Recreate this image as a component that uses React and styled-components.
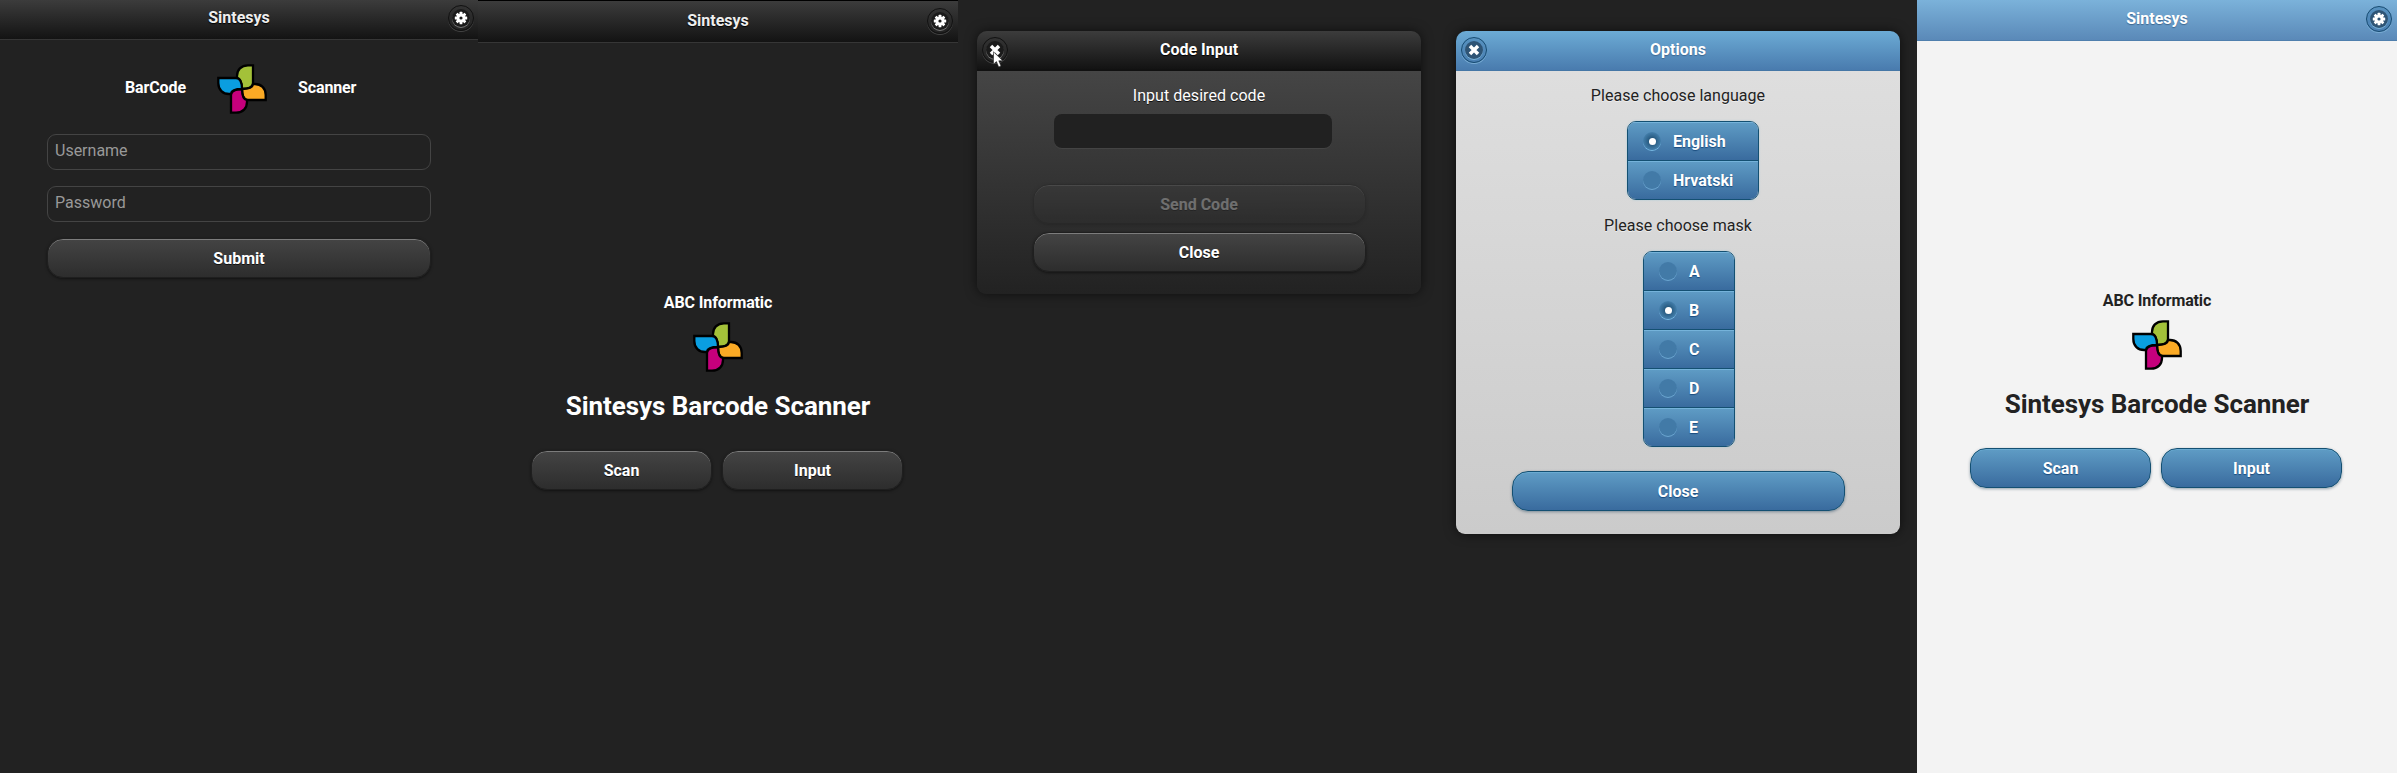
import React from "react";
import styled, { createGlobalStyle, css } from "styled-components";

const GlobalStyle = createGlobalStyle`
  *, *::before, *::after { box-sizing: border-box; }
  body { margin: 0; background: #222; }
  h1, h2, p { margin: 0; }
  button, input { font: inherit; }
`;

const darkButton = css`
  color: #fff;
  border: 1px solid #1f1f1f;
  background: linear-gradient(#444, #2d2d2d);
  text-shadow: 0 1px 0 #111;
  box-shadow: inset 0 1px 0 rgba(255, 255, 255, 0.3), 0 1px 3px rgba(0, 0, 0, 0.5);
`;

const blueButton = css`
  color: #fff;
  border: 1px solid #145072;
  background: linear-gradient(#5f9cc5, #396b9e);
  text-shadow: 0 1px 1px #194b7e;
  box-shadow: inset 0 1px 0 rgba(130, 200, 235, 0.35), 0 1px 3px rgba(0, 40, 70, 0.4);
`;

const Board = styled.div`
  display: flex;
  width: 2397px;
  height: 773px;
  overflow: hidden;
  background: #222;
  font-family: Roboto, "Liberation Sans", sans-serif;
  font-size: 16px;
  line-height: 20px;
`;

const Screen = styled.section`
  flex: none;
  width: ${(p) => p.$width}px;
  display: flex;
  flex-direction: column;
  background: ${(p) => (p.$light ? "#f3f3f3" : "#222")};
  color: ${(p) => (p.$light ? "#222" : "#fff")};
`;

const TopBar = styled.header`
  flex: none;
  position: relative;
  display: flex;
  justify-content: center;
  height: ${(p) => p.$height}px;
  padding-top: ${(p) => p.$pad}px;
  border-top: ${(p) => (p.$edge ? "1px solid #000" : "0")};
  border-bottom: 1px solid ${(p) => (p.$light ? "#4f7fad" : "#363636")};
  background: ${(p) =>
    p.$light
      ? "linear-gradient(#7bb2da, #5a89b8)"
      : "linear-gradient(#3c3c3c, #131313)"};
  color: ${(p) => (p.$light ? "#fff" : "#eee")};
  text-shadow: 0 1px 1px ${(p) => (p.$light ? "#3e6790" : "#000")};
`;

const Title = styled.h1`
  font-size: 16px;
  line-height: 20px;
  font-weight: 700;
`;

const RoundButton = styled.button`
  position: absolute;
  top: ${(p) => p.$top}px;
  ${(p) => (p.$left !== undefined ? `left: ${p.$left}px;` : `right: ${p.$right}px;`)}
  width: 26px;
  height: 26px;
  padding: 3px;
  border-radius: 50%;
  border: 1px solid ${(p) => (p.$blue ? "#164a70" : "#111")};
  background: ${(p) =>
    p.$blue ? "linear-gradient(#5792c0, #4a7fb2)" : "linear-gradient(#333, #222)"};
  box-shadow: 0 1px 0 ${(p) => (p.$blue ? "#79acd4" : "#444")};
`;

const IconDisc = styled.span`
  display: flex;
  align-items: center;
  justify-content: center;
  width: 18px;
  height: 18px;
  border-radius: 50%;
  background: ${(p) => (p.$blue ? "#2e5475" : "#1b1b1b")};
  box-shadow: 0 1px 0 ${(p) => (p.$blue ? "#79b2d8" : "#777")};
`;

const CredentialForm = styled.form`
  display: flex;
  flex-direction: column;
  padding: 24px 47px 0;
`;

const BrandRow = styled.div`
  display: grid;
  grid-template-columns: 61px 50px 60px;
  column-gap: 31px;
  align-items: center;
  justify-content: start;
  height: 50px;
  padding-left: 78px;
  margin-bottom: 20px;
`;

const BrandWord = styled.strong`
  margin-top: -2px;
  white-space: nowrap;
  letter-spacing: -0.12px;
`;

const TextField = styled.input`
  width: 384px;
  height: 36px;
  margin-bottom: 16px;
  padding: 0 7px 3px;
  border: 1px solid #444;
  border-radius: 9px;
  background: #222;
  color: #fff;
  &::placeholder { color: #999; opacity: 1; }
`;

const PillButton = styled.button`
  ${(p) => (p.$blue ? blueButton : darkButton)}
  width: ${(p) => p.$width}px;
  height: 40px;
  padding: 2px 0 0;
  border-radius: 16px;
  font-weight: 700;
  line-height: 20px;
  opacity: ${(p) => (p.$faded ? 0.3 : 1)};
`;

const Hero = styled.div`
  display: flex;
  flex-direction: column;
  align-items: center;
  padding-top: 250px;
`;

const Company = styled.p`
  font-weight: 700;
  margin-bottom: 9px;
  letter-spacing: -0.12px;
`;

const Headline = styled.h2`
  margin-top: 18px;
  font-size: 26px;
  line-height: 32px;
  font-weight: 700;
  letter-spacing: -0.06px;
  white-space: nowrap;
`;

const Actions = styled.div`
  display: flex;
  gap: 10px;
  margin-top: 28px;
  padding-right: 2px;
`;

const Dialog = styled.div`
  width: 444px;
  margin: 31px 0 0 19px;
  border-radius: 10px;
  box-shadow: 0 0 12px rgba(0, 0, 0, 0.6);
`;

const DialogBar = styled.header`
  position: relative;
  display: flex;
  justify-content: center;
  height: 40px;
  padding-top: 9px;
  border-radius: 10px 10px 0 0;
  border-bottom: ${(p) => (p.$blue ? "1px solid #4577a6" : "2px solid #111")};
  background: ${(p) =>
    p.$blue ? "linear-gradient(#6cabd5, #497bae)" : "linear-gradient(#3c3c3c, #131313)"};
  color: #fff;
  text-shadow: 0 1px 1px ${(p) => (p.$blue ? "#3e6790" : "#000")};
`;

const DialogBody = styled.div`
  display: flex;
  flex-direction: column;
  align-items: center;
  height: ${(p) => p.$height}px;
  padding-top: 15px;
  border-radius: 0 0 9px 9px;
  background: ${(p) => (p.$light ? "linear-gradient(#dedede, #cbcbcb)" : "linear-gradient(#454545, #222)")};
  color: ${(p) => (p.$light ? "#222" : "#fff")};
  text-shadow: 0 1px 0 ${(p) => (p.$light ? "#eee" : "#111")};
`;

const Prompt = styled.p`
  letter-spacing: 0.04px;
`;

const CodeField = styled.input`
  width: 278px;
  height: 34px;
  margin: 8px 12px 36px 0;
  border: 0;
  border-radius: 8px;
  background: #212121;
  box-shadow: 0 1px 0 #444;
`;

const ButtonStack = styled.div`
  display: flex;
  flex-direction: column;
  gap: 8px;
`;

const RadioGroup = styled.div`
  width: ${(p) => p.$width}px;
  margin: ${(p) => p.$margin};
  border: 1px solid #145072;
  border-radius: 9px;
  overflow: hidden;
  box-shadow: 0 0 2px rgba(120, 190, 220, 0.5);
`;

const RadioRow = styled.label`
  display: flex;
  align-items: center;
  gap: 12px;
  height: 38px;
  padding-left: 15px;
  color: #fff;
  font-weight: 700;
  text-shadow: 0 1px 1px #194b7e;
  background: linear-gradient(#5f9cc5, #396b9e);
  box-shadow: inset 0 1px 0 #75b3da;
  & + & {
    height: 39px;
    border-top: 1px solid #145072;
  }
`;

const RadioText = styled.span`
  padding-top: 2px;
`;

const RadioDot = styled.span`
  display: flex;
  align-items: center;
  justify-content: center;
  width: 18px;
  height: 18px;
  border-radius: 50%;
  background: ${(p) =>
    p.$on ? "radial-gradient(circle, #275a80 25%, #4a87b5 80%)" : "#427aa7"};
  box-shadow: 0 1px 0 ${(p) => (p.$on ? "#77b8e2" : "#6ba5d0")};
  &::after {
    content: "";
    width: 7px;
    height: 7px;
    border-radius: 50%;
    background: ${(p) => (p.$on ? "#fff" : "transparent")};
  }
`;

const Pointer = styled.svg`
  position: absolute;
  left: 16px;
  top: 20px;
`;

const PETAL =
  "M36 1.3V19C36 23 31 25 25 25C25 19 23.5 14.5 20 13.8V12C20 6 24 1.3 31 1.3Z";

function Logo() {
  const petals = [["#a3c139", 0], ["#fbaa25", 90], ["#c5007c", 180], ["#0a9ee0", 270]];
  return (
    <svg width="50" height="50" viewBox="0 0 50 50">
      {petals.map(([fill, turn]) => (
        <path key={fill} d={PETAL} fill={fill} stroke="#000" strokeWidth="2.3"
          transform={`rotate(${turn} 25 25)`} />
      ))}
    </svg>
  );
}

function Gear({ hole }) {
  return (
    <svg width="14" height="14" viewBox="0 0 14 14">
      {[0, 45, 90, 135].map((a) => (
        <rect key={a} x="5.6" y="0.8" width="2.8" height="12.4" rx="0.5" fill="#fff"
          transform={`rotate(${a} 7 7)`} />
      ))}
      <circle cx="7" cy="7" r="4.5" fill="#fff" />
      <circle cx="7" cy="7" r="1.6" fill={hole} />
    </svg>
  );
}

function Cross() {
  return (
    <svg width="12" height="12" viewBox="0 0 12 12">
      <path d="M2 2L10 10M10 2L2 10" stroke="#fff" strokeWidth="3.5" />
    </svg>
  );
}

function GearButton({ blue, ...place }) {
  return (
    <RoundButton type="button" aria-label="Options" $blue={blue} {...place}>
      <IconDisc $blue={blue}><Gear hole={blue ? "#2e5475" : "#1b1b1b"} /></IconDisc>
    </RoundButton>
  );
}

function CloseButton({ blue, ...place }) {
  return (
    <RoundButton type="button" aria-label="Close" $blue={blue} {...place}>
      <IconDisc $blue={blue}><Cross /></IconDisc>
    </RoundButton>
  );
}

function Choices({ items, selected, width, margin }) {
  return (
    <RadioGroup $width={width} $margin={margin}>
      {items.map((item) => (
        <RadioRow key={item}>
          <RadioDot $on={item === selected} />
          <RadioText>{item}</RadioText>
        </RadioRow>
      ))}
    </RadioGroup>
  );
}

function LoginScreen() {
  return (
    <Screen $width={478}>
      <TopBar $height={40} $pad={8}>
        <Title>Sintesys</Title>
        <GearButton $top={5} $right={4} />
      </TopBar>
      <CredentialForm>
        <BrandRow>
          <BrandWord>BarCode</BrandWord>
          <Logo />
          <BrandWord>Scanner</BrandWord>
        </BrandRow>
        <TextField placeholder="Username" />
        <TextField placeholder="Password" />
        <PillButton type="button" $width={384}>Submit</PillButton>
      </CredentialForm>
    </Screen>
  );
}

function HomeScreen({ light, width }) {
  return (
    <Screen $width={width} $light={light}>
      <TopBar $light={light} $edge={!light} $height={light ? 41 : 43} $pad={light ? 9 : 10}>
        <Title>Sintesys</Title>
        <GearButton blue={light} $top={light ? 6 : 7} $right={5} />
      </TopBar>
      <Hero>
        <Company>ABC Informatic</Company>
        <Logo />
        <Headline>Sintesys Barcode Scanner</Headline>
        <Actions>
          <PillButton $blue={light} $width={181}>Scan</PillButton>
          <PillButton $blue={light} $width={181}>Input</PillButton>
        </Actions>
      </Hero>
    </Screen>
  );
}

function CodeScreen() {
  return (
    <Screen $width={479}>
      <Dialog>
        <DialogBar>
          <Title>Code Input</Title>
          <CloseButton $top={6} $left={5} />
          <Pointer width="11" height="17" viewBox="0 0 11 17">
            <path d="M0.5 0.8V13.2L3.4 10.6L5.7 16L8 15L5.8 9.8H9.8Z" fill="#fff" stroke="#222" strokeWidth="0.6" />
          </Pointer>
        </DialogBar>
        <DialogBody $height={223}>
          <Prompt>Input desired code</Prompt>
          <CodeField aria-label="Code" />
          <ButtonStack>
            <PillButton $width={333} $faded>Send Code</PillButton>
            <PillButton $width={333}>Close</PillButton>
          </ButtonStack>
        </DialogBody>
      </Dialog>
    </Screen>
  );
}

function OptionsScreen() {
  return (
    <Screen $width={480}>
      <Dialog>
        <DialogBar $blue>
          <Title>Options</Title>
          <CloseButton blue $top={6} $left={5} />
        </DialogBar>
        <DialogBody $light $height={463}>
          <Prompt>Please choose language</Prompt>
          <Choices items={["English", "Hrvatski"]} selected="English" width={132} margin="15px 0 16px 30px" />
          <Prompt>Please choose mask</Prompt>
          <Choices items={["A", "B", "C", "D", "E"]} selected="B" width={92} margin="15px 0 24px 22px" />
          <PillButton $blue $width={333}>Close</PillButton>
        </DialogBody>
      </Dialog>
    </Screen>
  );
}

export default function App() {
  return (
    <>
      <GlobalStyle />
      <Board>
        <LoginScreen />
        <HomeScreen width={480} />
        <CodeScreen />
        <OptionsScreen />
        <HomeScreen light width={480} />
      </Board>
    </>
  );
}
